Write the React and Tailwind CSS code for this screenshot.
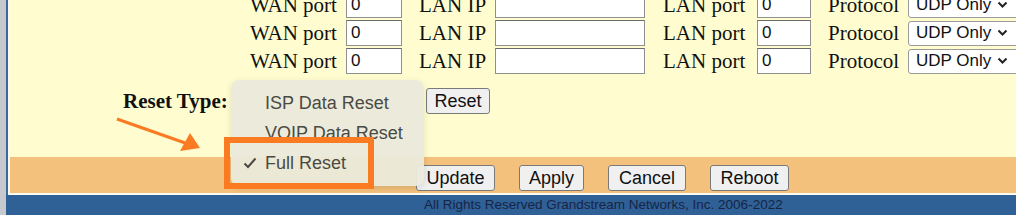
import React from 'react';

const serif = { fontFamily: '"Liberation Serif", "Times New Roman", serif' };

// one port-forward row of the router form
function PortRow() {
  return (
    <div className="flex items-center h-[26px] pl-[240px] text-[21px] text-[#111]" style={serif}>
      <span className="w-[96px] leading-none">WAN port</span>
      <div className="w-[56px] h-[26px] bg-white border border-[#8f8f8f] border-t-[#6b6b6b] flex items-center pl-[4px] font-['Liberation_Sans',sans-serif] text-[17px]">0</div>
      <span className="w-[76px] ml-[17px] leading-none">LAN IP</span>
      <div className="w-[150px] h-[26px] bg-white border border-[#8f8f8f] border-t-[#6b6b6b]" />
      <span className="w-[94px] ml-[18px] leading-none">LAN port</span>
      <div className="w-[54px] h-[26px] bg-white border border-[#8f8f8f] border-t-[#6b6b6b] flex items-center pl-[4px] font-['Liberation_Sans',sans-serif] text-[17px]">0</div>
      <span className="w-[80px] ml-[17px] leading-none">Protocol</span>
      <div className="w-[116px] h-[25px] shrink-0 bg-white border border-[#9a9a9a] rounded-[3px] flex items-center pl-[7px] gap-[6px] font-['Liberation_Sans',sans-serif] text-[17px] text-[#111] whitespace-nowrap">
        UDP Only
        <svg width="11" height="8" viewBox="0 0 11 8"><path d="M1.5 1.5 L5.5 5.5 L9.5 1.5" fill="none" stroke="#222" strokeWidth="2" /></svg>
      </div>
    </div>
  );
}

function Btn({ w, children }) {
  return (
    <div className={`${w} h-[26px] flex items-center justify-center bg-[#f0f0f0] border border-[#7a7a7a] rounded-[3px] text-[18px] text-[#111] font-['Liberation_Sans',sans-serif]`}>
      {children}
    </div>
  );
}

export default function App() {
  return (
    <div className="relative w-[1016px] h-[215px] overflow-hidden flex bg-[#c6cacf]">
      <div className="w-[6px] shrink-0" />
      <div className="flex-1 flex flex-col bg-[#2f6096]">
        <div className="flex flex-col border-l-[2px] border-[#3c6a9b]">
          <div className="flex flex-col border-l-[2px] border-b-[2px] border-[#fbfbf4]">
            <div className="h-[157px] bg-[#fffdd0] flex flex-col">
              <div className="flex flex-col gap-[2px] mt-[-8px]">
                <PortRow />
                <PortRow />
                <PortRow />
              </div>
              <div className="flex items-center h-[26px] mt-[14px] pl-[113px]">
                <span className="w-[108px] font-bold text-[21px] text-[#111] leading-none" style={serif}>Reset Type:</span>
                <div className="w-[195px]" />
                <Btn w="w-[64px]">Reset</Btn>
              </div>
            </div>
            <div className="h-[36px] bg-[#f3c17b] flex items-start pt-[8px] pl-[406px] gap-[24px]">
              <Btn w="w-[79px]">Update</Btn>
              <Btn w="w-[65px]">Apply</Btn>
              <Btn w="w-[78px]">Cancel</Btn>
              <Btn w="w-[79px]">Reboot</Btn>
            </div>
          </div>
        </div>
        <div className="flex-1 flex items-center pl-[418px] text-[13.5px] text-[#162545] font-['Liberation_Sans',sans-serif] leading-none">
          All Rights Reserved Grandstream Networks, Inc. 2006-2022
        </div>
      </div>

      {/* open select menu */}
      <div className="absolute left-[231px] top-[80px] w-[193px] h-[106px] rounded-[8px] bg-[#ebeadb]/95 shadow-[0_2px_6px_rgba(0,0,0,0.12)] flex flex-col pt-[8px] text-[18px] text-[#4a4a44] font-['Liberation_Sans',sans-serif]">
        <div className="h-[30px] flex items-center pl-[34px]">ISP Data Reset</div>
        <div className="h-[30px] flex items-center pl-[34px]">VOIP Data Reset</div>
        <div className="h-[30px] flex items-center pl-[12px]">
          <svg width="14" height="12" viewBox="0 0 14 12" className="mr-[8px]"><path d="M1.5 6.5 L5 10 L12.5 1.5" fill="none" stroke="#4a4a44" strokeWidth="2" /></svg>
          Full Reset
        </div>
      </div>

      {/* annotation */}
      <div className="absolute left-[224px] top-[137px] w-[150px] h-[52px] border-[6px] border-[#fb7b22]" />
      <svg className="absolute left-0 top-0" width="1016" height="215">
        <line x1="117" y1="119" x2="188" y2="144" stroke="#fb7b22" strokeWidth="3" />
        <polygon points="200,148 180,151 190,133" fill="#fb7b22" />
      </svg>
    </div>
  );
}
